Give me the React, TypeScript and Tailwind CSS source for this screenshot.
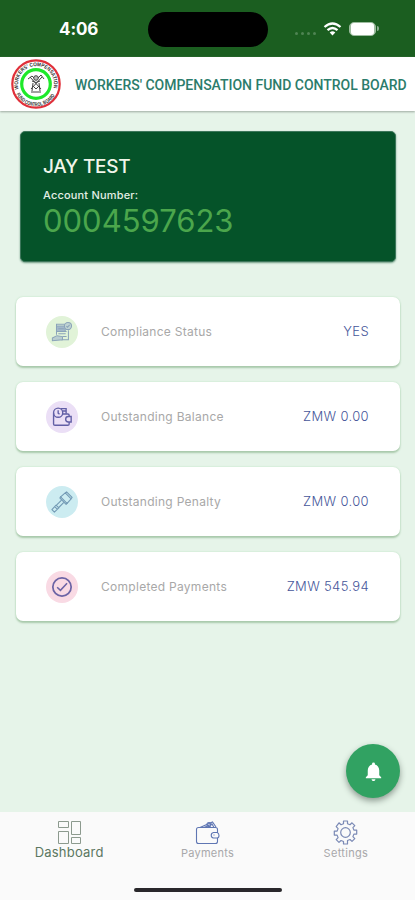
import React from 'react';

interface StatRowProps {
  label: string;
  value: string;
  iconBg: string;
  children: React.ReactNode;
}

const ComplianceIcon: React.FC = () => (
  <svg viewBox="0 0 24 24" className="w-[22px] h-[22px]" fill="none" stroke="#8aa3b9" strokeWidth="1.1">
    <path d="M6 15V3.500h11M19 10v10.500h-8" />
    <path d="M6 5.500h9.500v6H6z" fill="#a3b8c9" />
    <path d="M6 11.500h11M8 14h8M13 17h4M8 8.500h6" />
    <path d="M1.500 18.500l5-2.500 6 1v3.500l-11 1z" fill="#b9cdd0" />
    <circle cx="18.500" cy="5.500" r="3.900" fill="#bfd3d2" />
    <path d="M16.800 5.500l1.200 1.300 2.300-2.500" />
  </svg>
);

const BalanceIcon: React.FC = () => (
  <svg viewBox="0 0 24 24" className="w-[22px] h-[22px]" fill="none" stroke="#625fa6" strokeWidth="1.500">
    <path d="M2.800 8v11.500q0 1.500 1.500 1.500h14q1.500 0 1.500-1.500V17.500M19.800 11.500V10q0-1.300-1.500-1.300H13" />
    <circle cx="7.800" cy="7.300" r="5" />
    <path d="M7.800 4.500v3.300l1.500 1.200M10.500 2.800H16.500v5.700M13 5.500h4" />
    <path d="M22 11.500h-3a3 3 0 0 0 0 6h3z" />
  </svg>
);

const PenaltyIcon: React.FC = () => (
  <svg viewBox="0 0 24 24" className="w-[22px] h-[22px]" fill="none" stroke="#739ab5" strokeWidth="1.200" strokeLinejoin="round">
    <path d="M10.500 6.500l7 7 4.500-5-6.500-6.500z" />
    <path d="M9.500 7.500l7 7 1.500-1.500M9.500 7.500L11 6M15.500 2l1.500-1 6 6-1 1.500" />
    <path d="M11.500 10l-5.500 5.500M14 12.500l-5.500 5.500M5.500 15.500l3 3-4.800 4.500-2.700-2.700zM4 17l2.800 2.800" />
  </svg>
);

const CompletedIcon: React.FC = () => (
  <svg viewBox="0 0 24 24" className="w-[22px] h-[22px]" fill="none" stroke="#6c64a5">
    <circle cx="12" cy="12" r="10" strokeWidth="1.900" />
    <path d="M6.700 12.300l3.600 3.400L17.500 8" strokeWidth="1.700" />
  </svg>
);

const DashboardIcon: React.FC = () => (
  <svg viewBox="0 0 25 25" className="w-[25px] h-[25px]" fill="none" stroke="#8c9a8e" strokeWidth="1">
    <path d="M1.500 1.500h10v6h-10zM14.500 1.500h9v13h-9zM1.500 11.500h10v12h-10zM14.500 17.500h9v6h-9z" />
  </svg>
);

const WalletIcon: React.FC = () => (
  <svg viewBox="0 0 25 25" className="w-[25px] h-[25px]" fill="none" stroke="#5f76b3" strokeWidth="1.100">
    <path d="M22.500 13V9.500q0-2-2-2h-17q-2 0-2 2v12q0 2 2 2h17q2 0 2-2V18" />
    <path d="M22 12.500h-3.500a2.800 2.800 0 0 0 0 5.500H22q2 0 2-2.500t-2-3z" />
    <path d="M5 7.500L17.500 2l3.500 5M9 7.500l8-3.500 2 3.500" />
    <circle cx="14" cy="4.500" r="2" />
    <path d="M18.500 15h1" />
  </svg>
);

const SettingsIcon: React.FC = () => (
  <svg viewBox="0 0 25 25" className="w-[25px] h-[25px]" fill="none" stroke="#7a89b5" strokeWidth="1.200" strokeLinejoin="round">
    <path d="M10.500 3.700V1h4v2.700l2.500 1 2-1.900 2.800 2.800-1.900 2 1 2.500h2.800v4h-2.800l-1 2.500 1.900 2-2.800 2.800-2-1.900-2.500 1V24h-4v-2.500l-2.500-1-2 1.900-2.800-2.800 1.900-2-1-2.500H1.300v-4h2.800l1-2.500-1.900-2L6 2.800l2 1.900z" />
    <circle cx="12.500" cy="12.500" r="4.800" />
  </svg>
);

const Logo: React.FC = () => (
  <svg viewBox="0 0 50 50" className="w-[50px] h-[50px] shrink-0">
    <defs>
      <path id="sealTop" d="M7.700 30a18 18 0 1 1 34.600 0" />
      <path id="sealBottom" d="M5.300 35a22 22 0 0 0 39.400 0" />
    </defs>
    <circle cx="25" cy="25" r="23.700" fill="#fff" stroke="#e0303a" strokeWidth="2.200" />
    <circle cx="25" cy="25" r="14.300" fill="#fff" stroke="#1ee92a" strokeWidth="3.200" />
    <g fill="#333" fontFamily="Liberation Sans, sans-serif" fontWeight="bold" fontSize="5.400">
      <text><textPath href="#sealTop" textLength="65" lengthAdjust="spacingAndGlyphs">WORKERS' COMPENSATION</textPath></text>
      <text><textPath href="#sealBottom" textLength="47" lengthAdjust="spacingAndGlyphs">FUND CONTROL BOARD</textPath></text>
    </g>
    <g fill="none" stroke="#444" strokeWidth="1">
      <circle cx="25" cy="19" r="2.300" fill="#bbb" />
      <path d="M17 20l4-3 2 2M19 18l11 12M33 20l-3-4-3 3M31 18L20 30" />
      <path d="M21 22q4 3 8 0M22 24l-1 8M28 24l1 8M20 33h10M22 27l3 3 3-3" />
    </g>
  </svg>
);

const StatusBar: React.FC = () => (
  <div className="h-[57px] bg-[#1b5e20] grid grid-cols-[148px_120px_1fr] items-center shrink-0">
    <span className="pl-[59px] text-[17px] leading-[20px] font-bold text-white tracking-[-0.1px]">4:06</span>
    <div className="h-[35px] rounded-full bg-black mt-[1px]" />
    <div className="flex items-center pl-[27px]">
      <div className="flex gap-[3px] mt-[9px] mr-[7px]">
        <i className="w-[3px] h-[3px] rounded-full bg-[#4f8453]" />
        <i className="w-[3px] h-[3px] rounded-full bg-[#4f8453]" />
        <i className="w-[3px] h-[3px] rounded-full bg-[#4f8453]" />
        <i className="w-[3px] h-[3px] rounded-full bg-[#4f8453]" />
      </div>
      <svg viewBox="0 0 18 14" className="w-[19px] h-[14px]" fill="none" stroke="white" strokeWidth="2.300">
        <path d="M1 5q8-7 16 0M4 8.200q5-4.400 10 0" />
        <path d="M6.200 10.500q2.800-2.300 5.600 0L9 13.500z" fill="white" stroke="none" />
      </svg>
      <div className="ml-[7px] w-[27px] h-[14px] rounded-[5px] border border-[#9dbb9f] bg-[#9dbb9f] px-[1px]">
        <div className="w-full h-full rounded-[3px] bg-white" />
      </div>
      <i className="ml-[1px] w-[2px] h-[5px] rounded-r bg-[#8bad8e]" />
    </div>
  </div>
);

const StatRow: React.FC<StatRowProps> = ({ label, value, iconBg, children }) => (
  <div className="h-[69px] rounded-[7px] bg-white flex items-center pl-[30px] pr-[31px] shadow-[0_2px_2px_#a9c9ab,0_0_2px_#b7dfbc]">
    <div className={`w-[32px] h-[32px] rounded-full flex items-center justify-center shrink-0 ${iconBg}`}>
      {children}
    </div>
    <span className="ml-[23px] text-[12px] text-[#a8a8a8] whitespace-nowrap tracking-[0.28px]">{label}</span>
    <span className="ml-auto text-[13px] font-light text-[#46569a] whitespace-nowrap tracking-[0.35px]">{value}</span>
  </div>
);

const App: React.FC = () => {
  return (
    <div className="w-[415px] h-[900px] bg-[#e6f4e9] flex flex-col overflow-hidden font-['Inter',sans-serif]">
      <StatusBar />

      <header className="h-[54px] bg-white flex items-center pl-[11px] shrink-0 shadow-[0_1px_2px_#9da9a0]">
        <Logo />
        <h1 className="ml-[14px] mt-[2px] font-['Roboto',sans-serif] text-[14px] font-medium text-[#2b7c6b] whitespace-nowrap tracking-[-0.02px]">
          WORKERS' COMPENSATION FUND CONTROL BOARD
        </h1>
      </header>

      <main className="flex-1 pl-4 pr-[15px] pt-[20px] flex flex-col">
        <section className="ml-1 w-[376px] h-[131px] rounded-[5px] bg-[#055329] border border-[#3c765a] pl-[22px] pt-[23px] shadow-[0_1px_2px_#6e9b83]">
          <h2 className="text-[19px] leading-[24px] font-medium text-[#f0f5e9] tracking-[-0.25px]">JAY TEST</h2>
          <p className="mt-[9px] text-[11px] leading-[14px] font-medium text-[#e3eee4] tracking-[0.18px]">Account Number:</p>
          <p className="mt-[1px] text-[31px] leading-[36px] text-[#4ba64c]">0004597623</p>
        </section>

        <section className="mt-[35px] flex flex-col gap-[16px]">
          <StatRow label="Compliance Status" value="YES" iconBg="bg-[#e1f3d8]">
            <ComplianceIcon />
          </StatRow>
          <StatRow label="Outstanding Balance" value="ZMW 0.00" iconBg="bg-[#ebdff6]">
            <BalanceIcon />
          </StatRow>
          <StatRow label="Outstanding Penalty" value="ZMW 0.00" iconBg="bg-[#ccecf1]">
            <PenaltyIcon />
          </StatRow>
          <StatRow label="Completed Payments" value="ZMW 545.94" iconBg="bg-[#f9dae4]">
            <CompletedIcon />
          </StatRow>
        </section>

        <button className="mt-auto mb-[14px] ml-auto w-[54px] h-[54px] rounded-full bg-[#31a262] flex items-center justify-center shadow-[0_3px_6px_#8d9b91]">
          <svg viewBox="0 0 24 24" className="w-[23px] h-[23px]" fill="white">
            <path d="M12 22c1.100 0 2-.9 2-2h-4c0 1.100.9 2 2 2zm6-6v-5c0-3.070-1.640-5.640-4.500-6.320V4a1.500 1.500 0 0 0-3 0v.68C7.630 5.360 6 7.920 6 11v5l-2 2v1h16v-1z" />
          </svg>
        </button>
      </main>

      <nav className="h-[88px] bg-[#fafafa] shrink-0 flex flex-col">
        <div className="grid grid-cols-3 h-[76px] pt-[8px]">
          <div className="flex flex-col items-center">
            <DashboardIcon />
            <span className="text-[13px] leading-[14px] text-[#5b7761] tracking-[0.22px]">Dashboard</span>
          </div>
          <div className="flex flex-col items-center">
            <WalletIcon />
            <span className="mt-[1px] text-[11px] leading-[14px] text-[#a8a8aa] tracking-[0.25px]">Payments</span>
          </div>
          <div className="flex flex-col items-center">
            <SettingsIcon />
            <span className="mt-[1px] text-[11px] leading-[14px] text-[#a8a8aa] tracking-[0.3px]">Settings</span>
          </div>
        </div>
        <div className="w-[148px] h-[4px] rounded-full bg-[#29272b] mx-auto" />
      </nav>
    </div>
  );
};

export default App;
